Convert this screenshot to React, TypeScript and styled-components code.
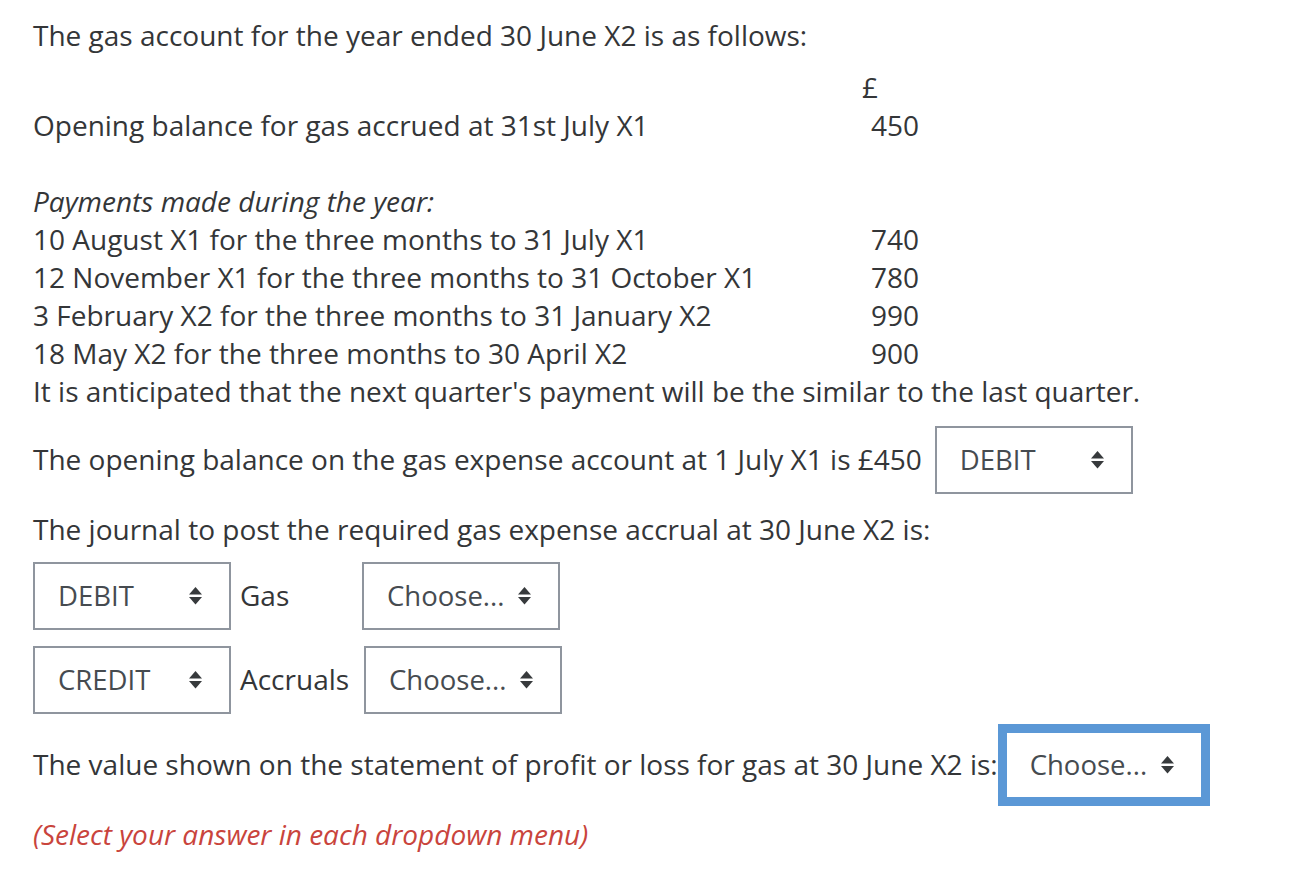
import React from 'react';
import styled, { createGlobalStyle } from 'styled-components';

const GlobalStyle = createGlobalStyle`
  html, body {
    margin: 0;
    padding: 0;
    background: #ffffff;
  }
  body {
    font-family: "Open Sans", "Noto Sans", "Liberation Sans", sans-serif;
    font-size: 28px;
    line-height: 38px;
    color: #343638;
  }
`;

const Page = styled.div`
  padding: 16px 33px 0 33px;
`;

const Para = styled.p<{ $top?: number }>`
  margin: ${(p) => p.$top ?? 0}px 0 0 0;
  white-space: nowrap;
`;

const AmountTable = styled.div<{ $top?: number }>`
  display: grid;
  grid-template-columns: 829px auto;
  margin-top: ${(p) => p.$top ?? 0}px;
`;

const Label = styled.div`
  white-space: nowrap;
`;

const Amount = styled.div<{ $indent?: number }>`
  padding-left: ${(p) => p.$indent ?? 9}px;
`;

const Heading = styled.div`
  font-style: italic;
  white-space: nowrap;
`;

const Row = styled.div<{ $top?: number; $gap?: number }>`
  display: flex;
  align-items: center;
  gap: ${(p) => p.$gap ?? 9}px;
  margin-top: ${(p) => p.$top ?? 0}px;
`;

const RowText = styled.span<{ $width?: number }>`
  ${(p) => (p.$width ? `width: ${p.$width}px;` : '')}
  white-space: nowrap;
  margin-top: -2px;
`;

const Select = styled.div<{ $focused?: boolean }>`
  box-sizing: border-box;
  width: 198px;
  height: 68px;
  display: flex;
  align-items: center;
  justify-content: space-between;
  padding: 0 26px 0 23px;
  border: 2px solid ${(p) => (p.$focused ? '#5b98d6' : '#8f959e')};
  box-shadow: ${(p) => (p.$focused ? '0 0 0 7px #5b98d6' : 'none')};
  background: #ffffff;
  color: #464b50;
  font-size: 27.5px;
  flex-shrink: 0;
`;

const Note = styled.p<{ $top?: number }>`
  margin: ${(p) => p.$top ?? 0}px 0 0 0;
  font-style: italic;
  color: #c9443c;
`;

const Arrows = () => (
  <svg width="15" height="20" viewBox="0 0 15 20">
    <path d="M7.5 1 L14 8.5 L1 8.5 Z" fill="#373a3c" />
    <path d="M1 11 L14 11 L7.5 18.5 Z" fill="#373a3c" />
  </svg>
);

const Dropdown: React.FC<{ value: string; focused?: boolean }> = ({ value, focused }) => (
  <Select $focused={focused}>
    <span>{value}</span>
    <Arrows />
  </Select>
);

const payments = [
  ['10 August X1 for the three months to 31 July X1', '740'],
  ['12 November X1 for the three months to 31 October X1', '780'],
  ['3 February X2 for the three months to 31 January X2', '990'],
  ['18 May X2 for the three months to 30 April X2', '900'],
];

export default function App() {
  return (
    <Page>
      <GlobalStyle />
      <Para>The gas account for the year ended 30 June X2 is as follows:</Para>

      <AmountTable $top={14}>
        <Label />
        <Amount $indent={0}>£</Amount>
        <Label>Opening balance for gas accrued at 31st July X1</Label>
        <Amount>450</Amount>
      </AmountTable>

      <AmountTable $top={38}>
        <Heading>Payments made during the year:</Heading>
        <Amount />
        {payments.map(([label, amount]) => (
          <React.Fragment key={label}>
            <Label>{label}</Label>
            <Amount>{amount}</Amount>
          </React.Fragment>
        ))}
      </AmountTable>
      <Para>It is anticipated that the next quarter's payment will be the similar to the last quarter.</Para>

      <Row $top={16} $gap={13}>
        <RowText>The opening balance on the gas expense account at 1 July X1 is £450</RowText>
        <Dropdown value="DEBIT" />
      </Row>

      <Para $top={16}>The journal to post the required gas expense accrual at 30 June X2 is:</Para>

      <Row $top={14}>
        <Dropdown value="DEBIT" />
        <RowText $width={113}>Gas</RowText>
        <Dropdown value="Choose..." />
      </Row>
      <Row $top={16}>
        <Dropdown value="CREDIT" />
        <RowText $width={115}>Accruals</RowText>
        <Dropdown value="Choose..." />
      </Row>

      <Row $top={17} $gap={7}>
        <RowText>The value shown on the statement of profit or loss for gas at 30 June X2 is:</RowText>
        <Dropdown value="Choose..." focused />
      </Row>

      <Note $top={16}>(Select your answer in each dropdown menu)</Note>
    </Page>
  );
}
